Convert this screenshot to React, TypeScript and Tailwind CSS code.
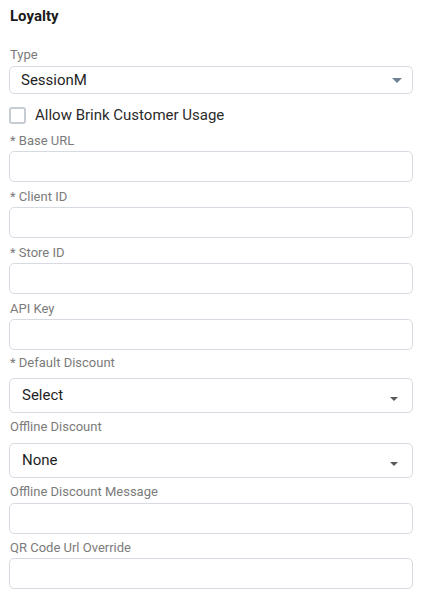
import React from 'react';

const Caret = ({ big }: { big?: boolean }) =>
  big ? (
    <svg width="10" height="5" viewBox="0 0 10 5" className="shrink-0">
      <path d="M0 0 H10 L5 5 Z" fill="#6f8293" />
    </svg>
  ) : (
    <svg width="8" height="4" viewBox="0 0 8 4" className="shrink-0">
      <path d="M0 0 H8 L4 4 Z" fill="#5a5a5a" />
    </svg>
  );

const Label = ({ text, className = '' }: { text: string; className?: string }) => (
  <div className={`text-[13px] leading-[17px] text-[#7b7b7b] ${className}`}>{text}</div>
);

const TextInput = () => (
  <input
    type="text"
    className="block w-full h-[31px] rounded-[5px] border border-[#d6dbe1] bg-white px-3 text-[14px] outline-none"
  />
);

const SelectBox = ({ value }: { value: string }) => (
  <div className="flex h-[35px] w-full items-center justify-between rounded-[5px] border border-[#d6dbe1] bg-white pl-[12px] pr-[14px]">
    <span className="text-[15px] text-[#1f1f1f]">{value}</span>
    <div className="mt-[6px]">
      <Caret />
    </div>
  </div>
);

const App = () => {
  const textFields = ['* Base URL', '* Client ID', '* Store ID', 'API Key'];

  return (
    <div className="min-h-[600px] w-[422px] bg-white px-[9px] pt-[6px] font-['Roboto','Liberation_Sans',sans-serif]">
      <h2 className="pl-px text-[15px] font-bold leading-[20px] text-[#1a1a1a]">Loyalty</h2>

      <Label text="Type" className="mt-[20px] mb-[3px] pl-px" />
      <div className="flex h-[28px] w-full items-center justify-between rounded-[5px] border border-[#d6dbe1] bg-white pl-[11px] pr-[10px]">
        <span className="text-[15px] text-[#1f1f1f]">SessionM</span>
        <Caret big />
      </div>

      <label className="mt-[13px] flex h-[17px] items-center gap-[9px]">
        <span className="block h-[17px] w-[17px] rounded-[3px] border-2 border-[#c6ccd3] bg-white" />
        <span className="text-[15px] text-[#2b2b2b]">Allow Brink Customer Usage</span>
      </label>

      {textFields.map((f, i) => (
        <div key={f} className={i === 0 ? 'mt-[8px]' : 'mt-[6px]'}>
          <Label text={f} className="mb-[2px] pl-px" />
          <TextInput />
        </div>
      ))}

      <div className="mt-[4px]">
        <Label text="* Default Discount" className="mb-[7px] pl-px" />
        <SelectBox value="Select" />
      </div>

      <div className="mt-[5px]">
        <Label text="Offline Discount" className="mb-[8px] pl-px" />
        <SelectBox value="None" />
      </div>

      <div className="mt-[5px]">
        <Label text="Offline Discount Message" className="mb-[3px] pl-px" />
        <TextInput />
      </div>

      <div className="mt-[5px]">
        <Label text="QR Code Url Override" className="mb-[2px] pl-px" />
        <TextInput />
      </div>
    </div>
  );
};

export default App;
